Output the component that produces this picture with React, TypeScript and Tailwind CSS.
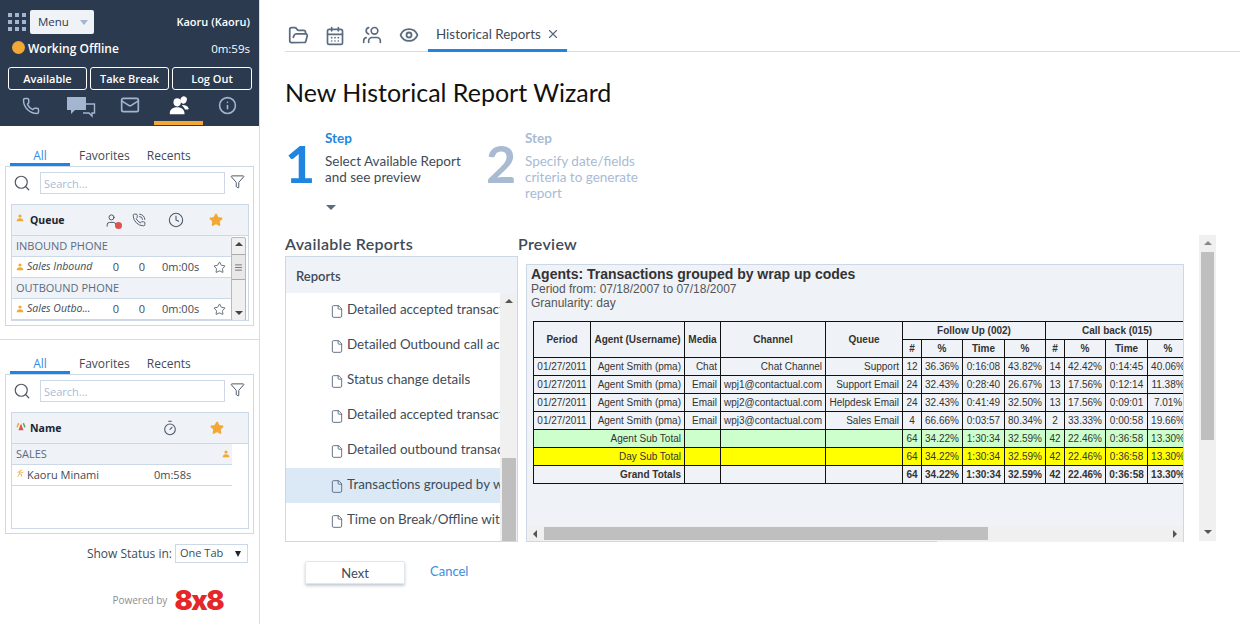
import React from 'react';
import { Phone, PhoneCall, Mail, Info, Star, Search, Filter, Clock, Timer, FolderOpen, CalendarDays, Eye, File, X, Users, User, Menu as Lines } from 'lucide-react';

const sans = "font-['Open_Sans','Noto_Sans',sans-serif]";
const wizard = "font-['Lato','Noto_Sans',sans-serif]";

function Person({ className = '' }: { className?: string }) {
  return (
    <svg viewBox="0 0 12 12" className={className} fill="currentColor">
      <circle cx="6" cy="3" r="2.4" />
      <path d="M1 11c0-3 2-4.6 5-4.6s5 1.600 5 4.600z" />
    </svg>
  );
}

function Runner({ className = '' }: { className?: string }) {
  return (
    <svg viewBox="0 0 12 12" className={className} fill="none" stroke="#f2a833" strokeWidth="1.300" strokeLinecap="round">
      <circle cx="7.500" cy="1.800" r="1.200" fill="#f2a833" stroke="none" />
      <path d="M2.500 5l3-1.200L5.500 7 3 11M5.500 7l3 1.500-.5 2.500M5.500 3.800l3 1.700 2-.7" />
    </svg>
  );
}

function StatusMix({ className = '' }: { className?: string }) {
  return (
    <svg viewBox="0 0 12 12" className={className}>
      <path d="M3 11l3-8 3 8z" fill="#e0524d" />
      <path d="M0.500 7l2-5 1.500 1-2 5z" fill="#f2a833" />
      <path d="M11.500 7l-2-5-1.500 1 2 5z" fill="#4caf50" />
    </svg>
  );
}

function People({ className = '' }: { className?: string }) {
  return (
    <svg viewBox="0 0 24 20" className={className} fill="currentColor">
      <ellipse cx="17" cy="4.500" rx="3.500" ry="4" transform="rotate(20 17 4.500)" />
      <path d="M16 10c3 0 5.500 1 6.500 3.500 .4 1-.5 1.500-1.500 1.500h-2.500c-.6-2-2-3.500-3.500-4.500z" />
      <ellipse cx="10" cy="7" rx="4" ry="4.500" />
      <path d="M2 20c-.5-5 3-7.500 8-7.500s8 2.500 8 7.500z" />
    </svg>
  );
}

function Chat({ className = '' }: { className?: string }) {
  return (
    <svg viewBox="0 0 30 22" className={className}>
      <path d="M1 1h19v13H9l-4 4v-4H1z" fill="#a3b5cf" />
      <path d="M19 8h9.500v9H26v3l-3-3h-6" fill="none" stroke="#a3b5cf" strokeWidth="1.400" />
    </svg>
  );
}

function GridDots() {
  return (
    <div className="grid grid-cols-3 gap-[3px] w-[18px]">
      {Array.from({ length: 9 }).map((_, i) => (
        <span key={i} className="w-1 h-1 bg-[#a3b5cf]" />
      ))}
    </div>
  );
}

function SearchRow() {
  return (
    <div className="flex items-center h-[22px] ml-[7px]">
      <Search className="w-[18px] h-[18px] text-[#4d5a68]" strokeWidth={1.6} />
      <div className="ml-[9px] w-[185px] h-[22px] border border-[#ccd8e6] px-[3px] text-[11px] leading-[22px] text-[#a9bbd3]">Search...</div>
      <Filter className="ml-[5px] w-[15px] h-[15px] text-[#4d5a68] -mt-1" strokeWidth={1.6} />
    </div>
  );
}

function ListTabs() {
  return (
    <div className="flex h-[23px] ml-[10px] text-[12px] text-[#414b57]">
      <div className="w-[60px] h-[23px] pt-[4px] text-center text-[#3b8de0] border-b-[3px] border-[#1f85e0]">All</div>
      <div className="ml-[9px] pt-[4px]">Favorites</div>
      <div className="ml-[17px] pt-[4px]">Recents</div>
    </div>
  );
}

function QueueRow({ name }: { name: string }) {
  return (
    <div className="flex items-center h-[21px] border-b border-[#ccd8e6] pl-[4px] text-[11px] text-[#414b57]">
      <Person className="w-[8px] h-[8px] text-[#f2a833]" />
      <span className="ml-[3px] w-[76px] italic text-[10.500px] whitespace-nowrap">{name}</span>
      <span className="w-[26px] text-center">0</span>
      <span className="w-[26px] text-center">0</span>
      <span className="ml-[7px] w-[51px]">0m:00s</span>
      <Star className="w-[13px] h-[13px] text-[#4d5a68]" strokeWidth={1.600} />
    </div>
  );
}

function Sidebar() {
  return (
    <aside className={`w-[260px] shrink-0 h-[624px] border-r border-[#d5dde8] flex flex-col ${sans}`}>
      <div className="bg-[#2b3a4e] h-[126px] shrink-0 text-white">
        <div className="flex items-center h-[40px] pt-1 pl-2 pr-[9px]">
          <GridDots />
          <div className="ml-1 w-[64px] h-[24px] rounded-[2px] bg-[#eff2f7] flex items-center justify-between pl-2 pr-[6px] text-[11.500px] text-[#2b3a4e]">
            Menu
            <span className="w-0 h-0 border-x-[4px] border-x-transparent border-t-[5px] border-t-[#a3b5cf]" />
          </div>
          <div className="ml-auto text-[11px] font-semibold">Kaoru (Kaoru)</div>
        </div>
        <div className="flex items-center h-[20px] mt-[-1px] pl-3 pr-[9px]">
          <span className="w-[13px] h-[13px] rounded-full bg-[#f2a833] -mt-1" />
          <span className="ml-[3px] text-[12px] font-semibold">Working Offline</span>
          <span className="ml-auto text-[11.500px]">0m:59s</span>
        </div>
        <div className="flex gap-[3px] ml-2 mt-[8px]">
          {[['Available', 'w-[79px]'], ['Take Break', 'w-[79px]'], ['Log Out', 'w-[80px]']].map(([t, w]) => (
            <div key={t} className={`${w} h-[23px] border border-white rounded-[3px] text-center text-[11px] leading-[21px] font-semibold`}>{t}</div>
          ))}
        </div>
        <div className="relative flex items-center h-[32px] mt-[4px] text-[#a3b5cf]">
          <Phone className="absolute left-[22px] top-[3px] w-[18px] h-[18px]" strokeWidth={2} />
          <Chat className="absolute left-[66px] top-[2px] w-[30px] h-[22px]" />
          <Mail className="absolute left-[119px] top-[1px] w-[22px] h-[20px]" strokeWidth={2} />
          <People className="absolute left-[168px] top-[1px] w-[22px] h-[20px] text-white" />
          <Info className="absolute left-[218px] top-[2px] w-[19px] h-[19px]" strokeWidth={2} />
          <span className="absolute left-[154px] top-[27px] w-[49px] h-[4px] bg-[#f2a833]" />
        </div>
      </div>

      {/* Queue list */}
      <div className="mt-[17px]"><ListTabs /></div>
      <div className="mx-[5px] h-[160px] border border-[#ccd8e6] pt-[5px]">
        <SearchRow />
        <div className="ml-[5px] mt-[10px] w-[238px] h-[117px] border border-[#ccd8e6] relative overflow-hidden">
          <div className="flex items-center h-[31px] bg-[#eff2f7] border-b border-[#ccd8e6] text-[#4d5a68]">
            <Person className="ml-[4px] w-[8px] h-[8px] text-[#f2a833] -mt-1" />
            <span className="ml-[6px] mt-[1px] text-[10.500px] font-bold text-[#1c2530] w-[74px]">Queue</span>
            <span className="relative">
              <User className="w-[15px] h-[15px]" strokeWidth={1.600} />
              <span className="absolute -right-[3px] -bottom-[1px] w-[7px] h-[7px] rounded-full bg-[#e0524d]" />
            </span>
            <PhoneCall className="ml-[13px] w-[14px] h-[14px]" strokeWidth={1.600} />
            <Clock className="ml-[22px] w-[16px] h-[16px]" strokeWidth={1.600} />
            <Star className="ml-[25px] w-[14px] h-[14px] text-[#f2a833]" fill="#f2a833" />
          </div>
          <div className="w-[220px]">
            <div className="h-[21px] bg-[#eff2f7] border-b border-[#ccd8e6] pl-[4px] text-[11px] leading-[20px] text-[#5b6b80]">INBOUND PHONE</div>
            <QueueRow name="Sales Inbound" />
            <div className="h-[21px] bg-[#eff2f7] border-b border-[#ccd8e6] pl-[4px] text-[11px] leading-[20px] text-[#5b6b80]">OUTBOUND PHONE</div>
            <QueueRow name="Sales Outbo..." />
          </div>
          <div className="absolute right-[2px] top-[32px] w-[15px] h-[84px] bg-[#f0f0f0] border border-[#b9b9b9] rounded-[2px] flex flex-col items-center">
            <span className="mt-[4px] w-0 h-0 border-x-[4px] border-x-transparent border-b-[4px] border-b-[#444]" />
            <span className="mt-[8px] w-full h-[26px] bg-[#e8e8e8] border-y border-[#aaa] flex items-center justify-center"><Lines className="w-[9px] h-[9px] text-[#555]" /></span>
            <span className="mt-auto mb-[5px] w-0 h-0 border-x-[4px] border-x-transparent border-t-[4px] border-t-[#444]" />
          </div>
        </div>
      </div>
      <div className="mt-[13px] h-px bg-[#d5dde8]" />

      {/* Agent list */}
      <div className="mt-[11px]"><ListTabs /></div>
      <div className="mx-[5px] h-[160px] border border-[#ccd8e6] pt-[5px]">
        <SearchRow />
        <div className="ml-[5px] mt-[10px] w-[238px] h-[117px] border border-[#ccd8e6]">
          <div className="flex items-center h-[31px] bg-[#eff2f7] border-b border-[#ccd8e6] text-[#4d5a68]">
            <StatusMix className="ml-[4px] w-[10px] h-[10px] -mt-1" />
            <span className="ml-[4px] mt-[1px] text-[10.500px] font-bold text-[#1c2530]">Name</span>
            <Timer className="ml-[101px] w-[16px] h-[16px]" strokeWidth={1.600} />
            <Star className="ml-[32px] w-[14px] h-[14px] text-[#f2a833]" fill="#f2a833" />
          </div>
          <div className="w-[220px]">
            <div className="flex items-center h-[21px] bg-[#eff2f7] border-b border-[#ccd8e6] pl-[4px] pr-[2px] text-[11px] text-[#5b6b80]">
              SALES
              <Person className="ml-auto w-[8px] h-[8px] text-[#f2a833]" />
            </div>
            <div className="flex items-center h-[21px] border-b border-[#ccd8e6] pl-[4px] text-[11px] text-[#414b57]">
              <Runner className="w-[8px] h-[8px] -mt-1" />
              <span className="ml-[3px] w-[127px]">Kaoru Minami</span>
              <span>0m:58s</span>
            </div>
          </div>
        </div>
      </div>
      <div className="flex items-center justify-end mt-[10px] mr-[11px] text-[12px] text-[#414b57]">
        Show Status in:
        <div className="ml-[3px] w-[73px] h-[19px] border border-[#ccd8e6] flex items-center justify-between pl-1 pr-[6px] text-[11px]">
          One Tab
          <span className="w-0 h-0 border-x-[3.500px] border-x-transparent border-t-[6px] border-t-[#1c2530]" />
        </div>
      </div>
      <div className="flex items-center justify-end mt-[26px] mr-[36px]">
        <span className="text-[10px] text-[#8a8f96] -mt-[1px]">Powered by</span>
        <span className="ml-[7px] text-[27px] leading-[24px] font-black text-[#e4282a] font-['Inter',sans-serif] tracking-[-1.500px]">8x8</span>
      </div>
    </aside>
  );
}

const reports = [
  'Detailed accepted transactions',
  'Detailed Outbound call activity',
  'Status change details',
  'Detailed accepted transactions',
  'Detailed outbound transactions',
  'Transactions grouped by wrap up',
  'Time on Break/Offline with reason',
];

function ReportList() {
  return (
    <div className="w-[233px] h-[286px] border border-[#ccd8e6] relative overflow-hidden">
      <div className="h-[36px] bg-[#eff2f7] pl-[10px] text-[13px] leading-[38px] font-semibold text-[#414b57]">Reports</div>
      <div className="w-[214px]">
        {reports.map((r, i) => (
          <div key={i} className={`flex items-center h-[35px] pl-[44px] ${i === 5 ? 'bg-[#dbe9f6]' : ''}`}>
            <File className="w-[14px] h-[15px] shrink-0 text-[#5b6b80] mt-[1px]" strokeWidth={1.600} />
            <span className="ml-[3px] text-[13.400px] text-[#414b57] whitespace-nowrap overflow-hidden -mt-[2px]">{r}</span>
          </div>
        ))}
      </div>
      <div className="absolute right-0 top-[36px] bottom-0 w-[17px] bg-[#f0f0f0] flex flex-col items-center">
        <span className="mt-[6px] w-0 h-0 border-x-[4px] border-x-transparent border-b-[4px] border-b-[#555]" />
        <span className="mt-auto w-[14px] h-[83px] bg-[#bfbfbf]" />
      </div>
    </div>
  );
}

const cols = [57, 94, 36, 105, 77, 19, 41, 42, 41, 19, 41, 42, 41];
const dataRows = [
  ['Chat Channel', 'Chat', 'Support', '12', '36.36%', '0:16:08', '43.82%', '14', '42.42%', '0:14:45', '40.06%'],
  ['wpj1@contactual.com', 'Email', 'Support Email', '24', '32.43%', '0:28:40', '26.67%', '13', '17.56%', '0:12:14', '11.38%'],
  ['wpj2@contactual.com', 'Email', 'Helpdesk Email', '24', '32.43%', '0:41:49', '32.50%', '13', '17.56%', '0:09:01', '7.01%'],
  ['wpj3@contactual.com', 'Email', 'Sales Email', '4', '66.66%', '0:03:57', '80.34%', '2', '33.33%', '0:00:58', '19.66%'],
];
const totals = ['64', '34.22%', '1:30:34', '32.59%', '42', '22.46%', '0:36:58', '13.30%'];
const cell = 'border border-[#111] h-[18px] p-0 px-[3px] whitespace-nowrap overflow-hidden';

function TotalRow({ label, tone, bold }: { label: string; tone: string; bold?: boolean }) {
  return (
    <tr className={`${tone} ${bold ? 'font-bold' : ''}`}>
      <td colSpan={2} className={`${cell} text-right`}>{label}</td>
      <td className={cell} />
      <td className={cell} />
      <td className={cell} />
      {totals.map((v, i) => (
        <td key={i} className={`${cell} text-center`}>{v}</td>
      ))}
    </tr>
  );
}

function ReportTable() {
  return (
    <table className="table-fixed border-collapse w-[655px] ml-[6px] mt-[11px] text-[10px] leading-none text-[#333] font-['Liberation_Sans',sans-serif]">
      <colgroup>
        {cols.map((w, i) => <col key={i} span={1} width={w} />)}
      </colgroup>
      <thead className="font-bold text-center">
        <tr>
          <th rowSpan={2} className={cell}>Period</th>
          <th rowSpan={2} className={cell}>Agent (Username)</th>
          <th rowSpan={2} className={cell}>Media</th>
          <th rowSpan={2} className={cell}>Channel</th>
          <th rowSpan={2} className={cell}>Queue</th>
          <th colSpan={4} className={cell}>Follow Up (002)</th>
          <th colSpan={4} className={cell}>Call back (015)</th>
        </tr>
        <tr>
          {['#', '%', 'Time', '%', '#', '%', 'Time', '%'].map((h, i) => (
            <th key={i} className={cell}>{h}</th>
          ))}
        </tr>
      </thead>
      <tbody>
        {dataRows.map((r, i) => (
          <tr key={i}>
            <td className={`${cell} text-center`}>01/27/2011</td>
            <td className={`${cell} text-right`}>Agent Smith (pma)</td>
            <td className={`${cell} text-right`}>{r[1]}</td>
            <td className={`${cell} text-right`}>{r[0]}</td>
            <td className={`${cell} text-right`}>{r[2]}</td>
            {r.slice(3, 11).map((v, j) => (
              <td key={j} className={`${cell} text-center`}>{v}</td>
            ))}
          </tr>
        ))}
        <TotalRow label="Agent Sub Total" tone="bg-[#ccffcc]" />
        <TotalRow label="Day Sub Total" tone="bg-[#ffff00]" />
        <TotalRow label="Grand Totals" tone="" bold />
      </tbody>
    </table>
  );
}

function Preview() {
  return (
    <div className="flex">
      <div className="w-[658px] h-[278px] mt-[8px] bg-[#eff2f7] border border-[#ccd8e6] border-b-0 relative overflow-hidden">
        <div className="pl-[4px] pt-[2px] font-['Liberation_Sans',sans-serif] text-[#555] text-[12px] leading-[14px]">
          <div className="text-[14px] leading-[15px] font-bold text-[#333]">Agents: Transactions grouped by wrap up codes</div>
          <div>Period from: 07/18/2007 to 07/18/2007</div>
          <div>Granularity: day</div>
        </div>
        <ReportTable />
        <div className="absolute left-0 right-0 bottom-[1px] h-[15px] bg-[#f0f0f0] flex items-center">
          <span className="ml-[6px] w-0 h-0 border-y-[4px] border-y-transparent border-r-[4px] border-r-[#555]" />
          <span className="ml-[7px] w-[444px] h-[13px] bg-[#bfbfbf]" />
          <span className="ml-auto mr-[6px] w-0 h-0 border-y-[4px] border-y-transparent border-l-[4px] border-l-[#555]" />
        </div>
        <span className="absolute left-0 bottom-0 w-[410px] h-px bg-[#ccd8e6]" />
      </div>
      <div className="ml-[15px] -mt-[21px] w-[17px] h-[306px] bg-[#f0f0f0] flex flex-col items-center">
        <span className="mt-[6px] w-0 h-0 border-x-[4px] border-x-transparent border-b-[4px] border-b-[#888]" />
        <span className="mt-[7px] w-[13px] h-[188px] bg-[#bfbfbf]" />
        <span className="mt-auto mb-[7px] w-0 h-0 border-x-[4px] border-x-transparent border-t-[4px] border-t-[#555]" />
      </div>
    </div>
  );
}

function Main() {
  return (
    <main className={`flex-1 pl-[25px] pr-5 ${wizard}`}>
      <div className="flex items-end h-[52px] border-b border-[#d5dde8] text-[#5b6b80]">
        <FolderOpen className="ml-[3px] mb-[5px] w-[21px] h-[21px]" strokeWidth={2} />
        <CalendarDays className="ml-[16px] mb-[5px] w-[20px] h-[20px]" strokeWidth={2} />
        <Users className="ml-[17px] mb-[6px] w-[20px] h-[20px] -scale-x-100" strokeWidth={2} />
        <Eye className="ml-[17px] mb-[6px] w-[20px] h-[20px]" strokeWidth={2.200} />
        <div className="ml-[9px] w-[139px] h-[33px] -mb-px border-b-[3px] border-[#1f85e0] flex items-center pl-2 text-[13.400px] text-[#414b57]">
          Historical Reports
          <X className="ml-[5px] w-[14px] h-[14px] text-[#5b6b80]" strokeWidth={2} />
        </div>
      </div>
      <h1 className="mt-[24px] text-[25px] leading-[32px] text-[#111]">New Historical Report Wizard</h1>

      <div className="flex mt-[22px] h-[75px]">
        <div className="w-[40px] text-[52px] leading-[54px] font-bold text-[#1f85e0] pt-[6px]">1</div>
        <div className="w-[161px] text-[13.500px] leading-[16px] text-[#414b57]">
          <div className="font-bold text-[#1f85e0] mb-[7px]">Step</div>
          Select Available Report<br />and see preview
        </div>
        <div className="w-[39px] text-[52px] leading-[54px] font-bold text-[#a9bbd3] pt-[6px]">2</div>
        <div className="text-[13.500px] leading-[16px] text-[#a9bbd3]">
          <div className="font-bold mb-[7px]">Step</div>
          Specify date/fields<br />criteria to generate<br />report
        </div>
      </div>
      <span className="block ml-[41px] w-0 h-0 border-x-[5px] border-x-transparent border-t-[5px] border-t-[#5b6b80]" />

      <div className="flex mt-[25px]">
        <div className="w-[233px]">
          <h2 className="text-[16px] leading-[17px] h-[21px] font-semibold text-[#414b57] tracking-[0.3px]">Available Reports</h2>
          <ReportList />
        </div>
        <div>
          <h2 className="text-[16px] leading-[17px] h-[21px] font-semibold text-[#414b57] tracking-[0.3px]">Preview</h2>
          <div className="ml-[8px]"><Preview /></div>
        </div>
      </div>

      <div className="flex items-center mt-[19px] ml-[20px]">
        <div className="w-[100px] h-[23px] rounded-[2px] border border-[#e2e7ee] shadow-[0_2px_3px_rgba(90,110,140,0.35)] text-center text-[13px] leading-[23px] text-[#414b57]">Next</div>
        <div className="ml-[25px] -mt-[2px] text-[13px] text-[#3b8de0]">Cancel</div>
      </div>
    </main>
  );
}

export default function App() {
  return (
    <div className="flex w-[1260px] h-[624px] bg-white overflow-hidden">
      <Sidebar />
      <Main />
    </div>
  );
}
